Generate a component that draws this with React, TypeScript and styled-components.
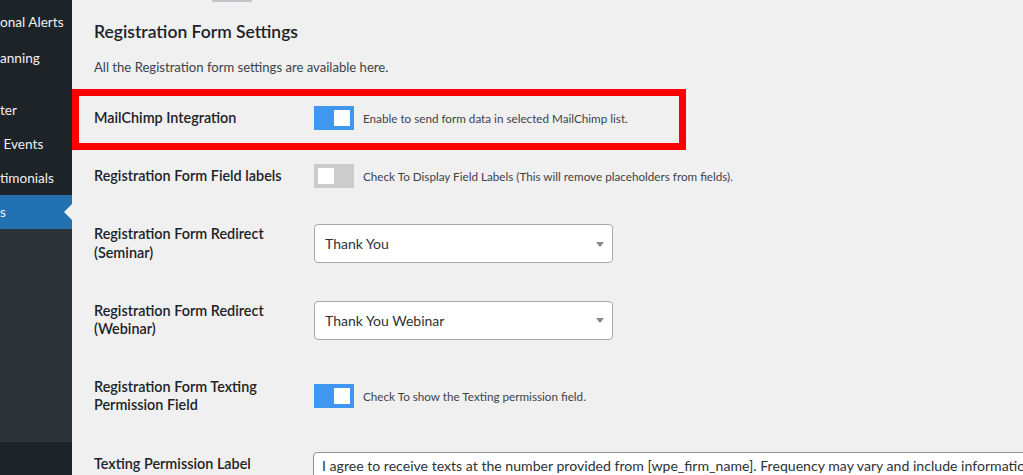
import styled, { createGlobalStyle } from "styled-components";

const GlobalStyle = createGlobalStyle`
  html, body {
    margin: 0;
    padding: 0;
    height: 475px;
    overflow: hidden;
    background: #f0f0f1;
  }
  #root {
    height: 100%;
  }
`;

const FONT = `Lato, "Open Sans", "Liberation Sans", sans-serif`;

/** SIDEBAR ITEMS (cropped admin menu) */
const MENU = [
  { label: "onal Alerts", gap: 5 },
  { label: "anning", gap: 2 },
  { label: "ter", gap: 18 },
  { label: " Events", gap: 0 },
  { label: "timonials", gap: 0 },
];

const App = () => {
  return (
    <>
      <GlobalStyle />
      <Page>
        <Sidebar>
          <Menu>
            {MENU.map((item) => (
              <MenuItem key={item.label} gap={item.gap}>
                {item.label}
              </MenuItem>
            ))}
            <MenuItem gap={0} active>
              s
              <ActiveArrow />
            </MenuItem>
            <Submenu />
          </Menu>
        </Sidebar>

        <Main>
          <TabStrip>
            <TabEdge />
          </TabStrip>
          <Heading>Registration Form Settings</Heading>
          <Intro>All the Registration form settings are available here.</Intro>

          <FormTable>
            <Row>
              <Highlight />
              <Label>MailChimp Integration</Label>
              <Field>
                <Toggle on />
                <Hint>Enable to send form data in selected MailChimp list.</Hint>
              </Field>
            </Row>

            <Row>
              <Label>Registration Form Field labels</Label>
              <Field>
                <Toggle />
                <Hint>
                  Check To Display Field Labels (This will remove placeholders from fields).
                </Hint>
              </Field>
            </Row>

            <Row>
              <Label>
                Registration Form Redirect
                <br />
                (Seminar)
              </Label>
              <Field>
                <Select>
                  Thank You
                  <Caret />
                </Select>
              </Field>
            </Row>

            <Row>
              <Label>
                Registration Form Redirect
                <br />
                (Webinar)
              </Label>
              <Field>
                <Select>
                  Thank You Webinar
                  <Caret />
                </Select>
              </Field>
            </Row>

            <Row>
              <Label>
                Registration Form Texting
                <br />
                Permission Field
              </Label>
              <Field>
                <Toggle on />
                <Hint>Check To show the Texting permission field.</Hint>
              </Field>
            </Row>

            <Row top>
              <Label>Texting Permission Label</Label>
              <Field top>
                <TextBox>
                  I agree to receive texts at the number provided from [wpe_firm_name]. Frequency
                  may vary and include information on appointments, events, and other marketing
                  messages.
                </TextBox>
              </Field>
            </Row>
          </FormTable>
        </Main>
      </Page>
    </>
  );
};

export default App;

const Page = styled.div`
  display: flex;
  height: 475px;
  font-family: ${FONT};
`;

const Sidebar = styled.aside`
  width: 72px;
  flex-shrink: 0;
  background: #1d2327;
  overflow: hidden;
  display: flex;
  flex-direction: column;
`;

const Menu = styled.ul`
  list-style: none;
  margin: 0;
  padding: 0;
  display: flex;
  flex-direction: column;
`;

const MenuItem = styled.li<{ gap: number; active?: boolean }>`
  position: relative;
  margin-top: ${(p) => p.gap}px;
  height: 34px;
  display: flex;
  align-items: center;
  white-space: pre;
  font-size: 13.6px;
  color: #f0f0f1;
  background: ${(p) => (p.active ? "#2271b1" : "transparent")};
`;

const ActiveArrow = styled.span`
  position: absolute;
  right: 0;
  top: 50%;
  margin-top: -8px;
  border: 8px solid transparent;
  border-right-color: #f0f0f1;
  border-left-width: 0;
`;

const Submenu = styled.li`
  height: 213px;
  background: #2c3338;
`;

const Main = styled.main`
  flex: 1;
  min-width: 0;
  overflow: hidden;
  padding-left: 22px;
  color: #1d2327;
`;

const TabStrip = styled.div`
  height: 2px;
  display: flex;
  padding-left: 118px;
`;

const TabEdge = styled.div`
  width: 40px;
  background: #c3c4c7;
`;

const Heading = styled.h2`
  margin: 19px 0 0;
  font-size: 17.5px;
  font-weight: 600;
  line-height: 22px;
  color: #1d2327;
`;

const Intro = styled.p`
  margin: 14px 0 0;
  font-size: 13.1px;
  line-height: 20px;
  color: #3c434a;
`;

const FormTable = styled.div`
  margin-top: 12px;
  display: flex;
  flex-direction: column;
`;

const Row = styled.div<{ top?: boolean }>`
  position: relative;
  display: grid;
  grid-template-columns: 220px 1fr;
  align-items: ${(p) => (p.top ? "start" : "center")};
`;

const Highlight = styled.div`
  position: absolute;
  left: -22px;
  top: 0;
  width: 614px;
  height: 61px;
  box-sizing: border-box;
  border: 7px solid #ff0000;
  pointer-events: none;
`;

const Label = styled.div`
  padding: 20px 10px 20px 0;
  font-size: 14.4px;
  font-weight: 600;
  line-height: 18.2px;
  color: #1d2327;
`;

const Field = styled.div<{ top?: boolean }>`
  display: flex;
  align-items: center;
  padding-top: ${(p) => (p.top ? "17px" : "0")};
  min-width: 0;
`;

const Toggle = styled.span<{ on?: boolean }>`
  width: 40px;
  height: 24px;
  flex-shrink: 0;
  box-sizing: border-box;
  padding: 4px;
  display: flex;
  align-items: center;
  justify-content: ${(p) => (p.on ? "flex-end" : "flex-start")};
  background: ${(p) => (p.on ? "#3f97f0" : "#cccccc")};

  &::after {
    content: "";
    width: 16px;
    height: 16px;
    background: #ffffff;
  }
`;

const Hint = styled.span`
  margin-left: 9px;
  font-size: 11.7px;
  color: #3c434a;
  white-space: nowrap;
`;

const Select = styled.div`
  position: relative;
  width: 299px;
  height: 39px;
  box-sizing: border-box;
  padding: 0 10px;
  display: flex;
  align-items: center;
  background: #ffffff;
  border: 1px solid #a7aaad;
  border-radius: 4px;
  font-size: 14px;
  color: #2c3338;
`;

const Caret = styled.span`
  position: absolute;
  right: 8px;
  top: 50%;
  margin-top: -2px;
  border-left: 4px solid transparent;
  border-right: 4px solid transparent;
  border-top: 5px solid #888888;
`;

const TextBox = styled.div`
  margin-left: -1px;
  width: 760px;
  height: 60px;
  flex-shrink: 0;
  box-sizing: border-box;
  padding: 3px 8px;
  background: #ffffff;
  border: 1px solid #8c8f94;
  border-radius: 4px;
  font-size: 14.1px;
  line-height: 20px;
  color: #2c3338;
  white-space: nowrap;
  overflow: hidden;
`;
